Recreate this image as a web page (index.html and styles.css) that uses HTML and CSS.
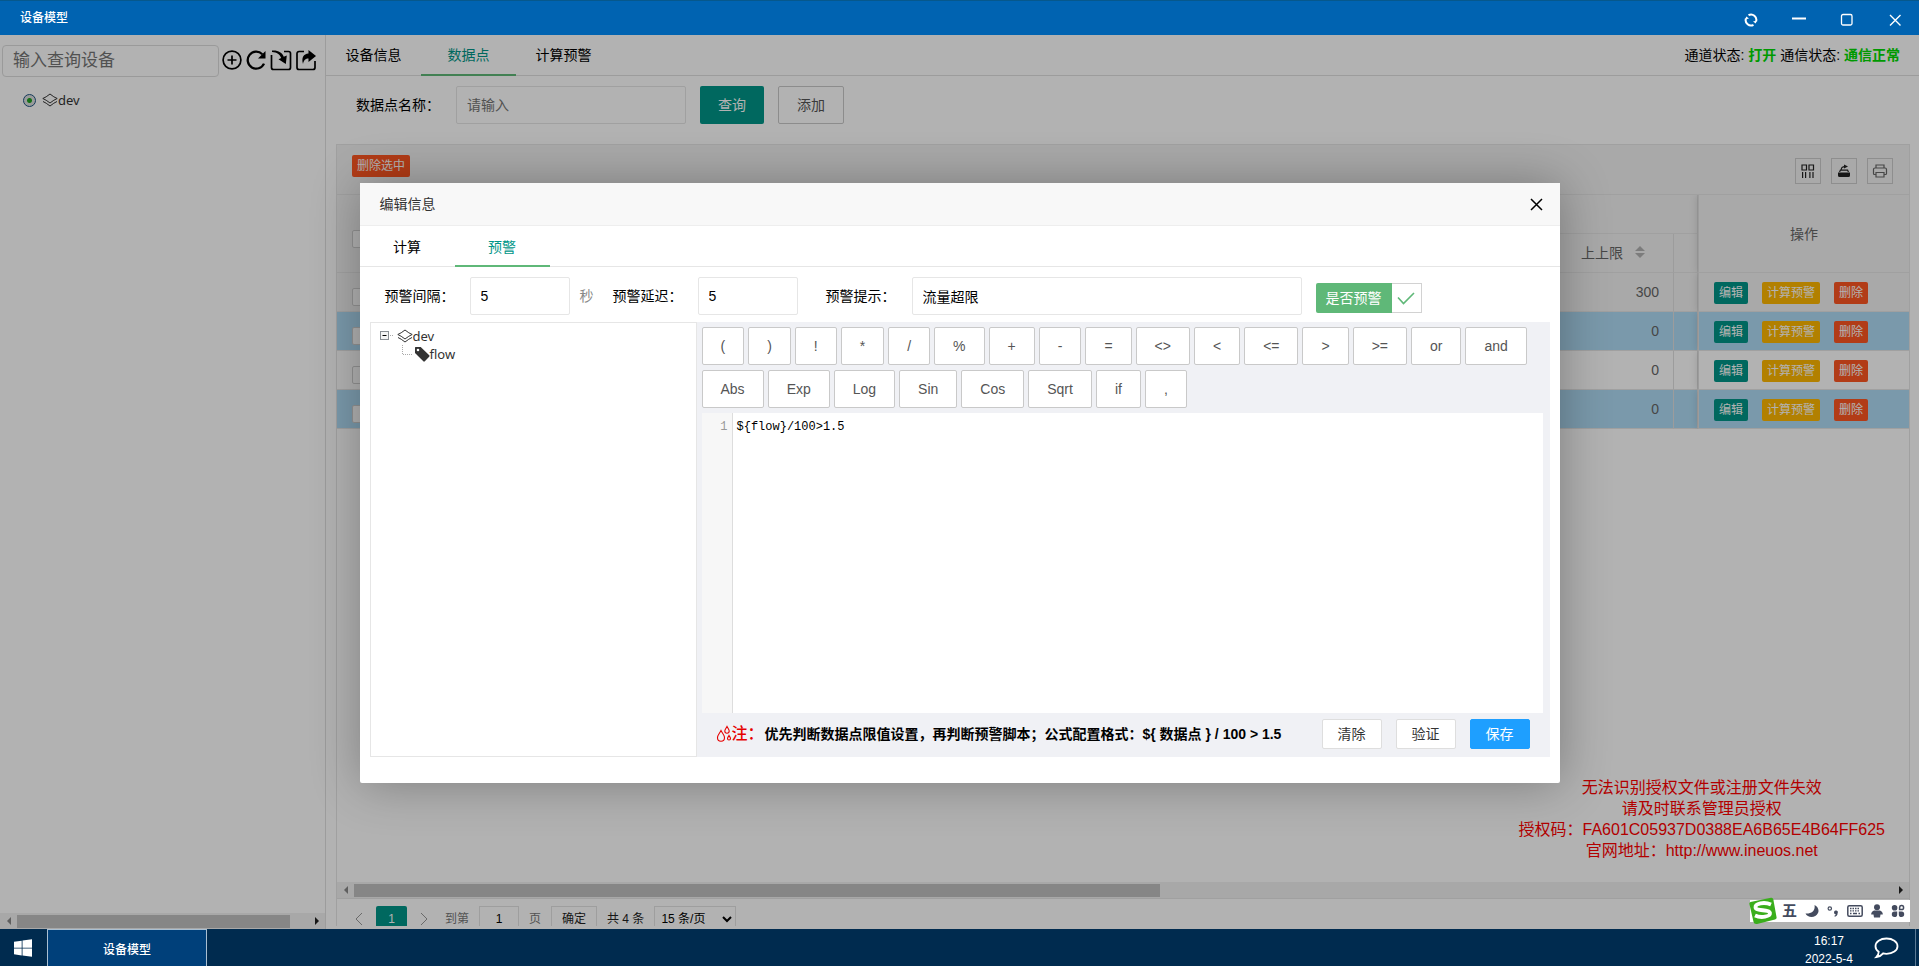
FILE: index.html
```html
<!DOCTYPE html>
<html lang="zh-CN">
<head>
<meta charset="utf-8">
<title>设备模型</title>
<link rel="stylesheet" href="styles.css">
</head>
<body>
<header class="titlebar">
  <h1 class="titlebar-name">设备模型</h1>
  <div class="window-controls">
    <button type="button" aria-label="刷新"><svg width="14" height="14" viewBox="0 0 14 14" fill="none" stroke="currentColor" stroke-width="2"><path d="M4.500 2.200a5.300 5.300 0 0 1 7.600 6.200M9.500 11.800a5.300 5.300 0 0 1-7.600-6.200"/><path d="M1 6.500L2.300 3.500 5 5.500zM13 7.500l-1.300 3L9 8.500z" fill="currentColor" stroke="none"/></svg></button>
    <button type="button" aria-label="最小化"><svg width="14" height="14" viewBox="0 0 14 14"><path d="M0 4.500h14v2H0z" fill="currentColor"/></svg></button>
    <button type="button" aria-label="最大化"><svg width="14" height="14" viewBox="0 0 14 14" fill="none" stroke="currentColor" stroke-width="1.3"><rect x="1.5" y="1.5" width="10.5" height="10.5" rx="1.5"/></svg></button>
    <button type="button" aria-label="关闭"><svg width="14" height="14" viewBox="0 0 14 14" fill="none" stroke="currentColor" stroke-width="1.4"><path d="M2 2l10.500 10.500M12.500 2L2 12.500"/></svg></button>
  </div>
</header>

<main class="workspace">
  <aside class="sidebar">
    <div class="sidebar-search">
      <input class="device-input" type="text" placeholder="输入查询设备" aria-label="输入查询设备">
      <button type="button" class="icon-btn" aria-label="新增"><svg width="20" height="20" viewBox="0 0 20 20" fill="none" stroke="currentColor" stroke-width="1.7"><circle cx="10" cy="10" r="8.900"/><path d="M10 5.500v9M5.500 10h9"/></svg></button>
      <button type="button" class="icon-btn" aria-label="刷新"><svg width="22" height="22" viewBox="0 0 22 22"><path d="M17.300 5.200A8.500 8.500 0 1 0 19 14.600" fill="none" stroke="currentColor" stroke-width="2.300"/><path d="M20.500 2v7.500h-7.500z" fill="currentColor"/></svg></button>
      <button type="button" class="icon-btn" aria-label="导入"><svg width="22" height="22" viewBox="0 0 22 22"><path d="M1.500 6v12.500a2 2 0 0 0 2 2h15a2 2 0 0 0 2-2V4.500a2 2 0 0 0-2-2H14" fill="none" stroke="currentColor" stroke-width="1.700"/><path d="M2 1.500c6-.5 10 1.800 11.800 6.200l3-1.200-1 8.500-7.300-4.800 2.700-1.200C9.800 5.500 7 3.200 2 3z" fill="currentColor"/></svg></button>
      <button type="button" class="icon-btn" aria-label="导出"><svg width="22" height="22" viewBox="0 0 22 22"><path d="M9 2.500H4a2 2 0 0 0-2 2v14a2 2 0 0 0 2 2h14a2 2 0 0 0 2-2V12" fill="none" stroke="currentColor" stroke-width="1.700"/><path d="M13.500 1l7.500 6-7.500 6V9.500C10.500 9.500 8.800 11 8 15 6.200 9 8.500 4.800 13.500 4.500z" fill="currentColor"/></svg></button>
    </div>
    <label class="device-node">
      <input type="radio" name="device" class="device-radio" checked>
      <svg width="16" height="14" viewBox="0 0 16 14" fill="none" stroke="currentColor"><path d="M.8 5.500Q4 4.300 8 1q4 3.300 7.200 4.500Q12 6.800 8 10 4 6.800.8 5.500zM1 8.500Q4 9.800 8 13q4-3.200 7-4.500"/></svg>
      <span>dev</span>
    </label>
    <div class="scrollbar sidebar-scroll"><span class="arrow arrow-left"></span><span class="thumb sidebar-thumb"></span><span class="arrow arrow-right"></span></div>
  </aside>

  <section class="content">
    <div class="content-head">
      <nav class="tabs">
        <button type="button" class="tab">设备信息</button>
        <button type="button" class="tab tab-active">数据点</button>
        <button type="button" class="tab">计算预警</button>
      </nav>
      <p class="status">通道状态: <b>打开</b> 通信状态: <b>通信正常</b></p>
    </div>

    <form class="query">
      <label class="query-label" for="point-name">数据点名称：</label>
      <input class="field query-field" id="point-name" type="text" placeholder="请输入">
      <button type="button" class="btn btn-primary">查询</button>
      <button type="button" class="btn">添加</button>
    </form>

    <div class="grid-panel">
      <div class="grid-tools">
        <button type="button" class="mini mini-danger">删除选中</button>
        <div class="tool-icons">
          <button type="button" class="tool" aria-label="筛选列"><svg width="14" height="14" viewBox="0 0 14 14" fill="none" stroke="currentColor" stroke-width="1.200"><path d="M1 1h4.500v5H1zM8 1h4.500v5H8zM1.600 8v6M4.600 8v6M8.900 8v6M12 8v6"/></svg></button>
          <button type="button" class="tool" aria-label="导出"><svg width="14" height="14" viewBox="0 0 14 14"><path d="M1 8.500h12v3a1.500 1.500 0 0 1-1.500 1.500h-9A1.500 1.500 0 0 1 1 11.500zM7 .5l4 2L7 4.500V3.500C5.500 3.500 5 4 4.800 5.500H11l1 2.500h-1.200l-.6-1.300H3.800L3.200 8H2l1-2.500h.7C3.800 3.500 5 2.300 7 2z" fill="currentColor"/></svg></button>
          <button type="button" class="tool tool-soft" aria-label="打印"><svg width="16" height="14" viewBox="0 0 16 14" fill="none" stroke="currentColor" stroke-width="1.200"><path d="M4 4V1h8v3M4 10.500H2.500a1 1 0 0 1-1-1v-4A1.500 1.500 0 0 1 3 4h10a1.500 1.500 0 0 1 1.500 1.500v4a1 1 0 0 1-1 1H12M4 8.500h8V13H4z"/></svg></button>
        </div>
      </div>
      <div class="grid-body">
        <table class="grid">
          <colgroup><col class="col-check"><col><col class="col-limit"><col class="col-gap"><col class="col-ops"></colgroup>
          <thead>
            <tr>
              <th rowspan="2" class="check-cell"><input type="checkbox" class="check" aria-label="全选"></th>
              <th colspan="3"></th>
              <th rowspan="2" class="ops-cell">操作</th>
            </tr>
            <tr>
              <th></th>
              <th class="limit-head">上上限 <svg width="10" height="14" viewBox="0 0 10 14"><path d="M5 1l5 5H0zM5 13l5-5H0z" fill="#b2b2b2"/></svg></th>
              <th></th>
            </tr>
          </thead>
          <tbody>
            <tr class="row-hover">
              <td class="check-cell"><input type="checkbox" class="check" aria-label="选择第1行"></td><td></td><td class="num">300</td><td></td>
              <td class="ops-cell"><div class="ops"><button type="button" class="mini mini-primary">编辑</button><button type="button" class="mini mini-warm">计算预警</button><button type="button" class="mini mini-danger">删除</button></div></td>
            </tr>
            <tr class="row-blue">
              <td class="check-cell"><input type="checkbox" class="check" aria-label="选择第2行"></td><td></td><td class="num">0</td><td></td>
              <td class="ops-cell"><div class="ops"><button type="button" class="mini mini-primary">编辑</button><button type="button" class="mini mini-warm">计算预警</button><button type="button" class="mini mini-danger">删除</button></div></td>
            </tr>
            <tr>
              <td class="check-cell"><input type="checkbox" class="check" aria-label="选择第3行"></td><td></td><td class="num">0</td><td></td>
              <td class="ops-cell"><div class="ops"><button type="button" class="mini mini-primary">编辑</button><button type="button" class="mini mini-warm">计算预警</button><button type="button" class="mini mini-danger">删除</button></div></td>
            </tr>
            <tr class="row-blue">
              <td class="check-cell"><input type="checkbox" class="check" aria-label="选择第4行"></td><td></td><td class="num">0</td><td></td>
              <td class="ops-cell"><div class="ops"><button type="button" class="mini mini-primary">编辑</button><button type="button" class="mini mini-warm">计算预警</button><button type="button" class="mini mini-danger">删除</button></div></td>
            </tr>
          </tbody>
        </table>
      </div>
      <div class="scrollbar"><span class="arrow arrow-left"></span><span class="thumb grid-thumb"></span><span class="arrow arrow-right"></span></div>
      <div class="pager">
        <button type="button" class="page-step" aria-label="上一页"><svg width="8" height="14" viewBox="0 0 8 14" fill="none" stroke="currentColor"><path d="M7 1L1 7l6 6"/></svg></button>
        <button type="button" class="page-current">1</button>
        <button type="button" class="page-step" aria-label="下一页"><svg width="8" height="14" viewBox="0 0 8 14" fill="none" stroke="currentColor"><path d="M1 1l6 6-6 6"/></svg></button>
        <label class="pager-soft pager-jump" for="page-no">到第</label>
        <input class="page-input" id="page-no" type="text" value="1">
        <span class="pager-soft">页</span>
        <button type="button" class="page-go">确定</button>
        <span class="pager-total">共 4 条</span>
        <select class="page-size" aria-label="每页条数"><option>15 条/页</option></select>
      </div>
    </div>
  </section>

  <div class="license">
    <p>无法识别授权文件或注册文件失效</p>
    <p>请及时联系管理员授权</p>
    <p>授权码：FA601C05937D0388EA6B65E4B64FF625</p>
    <p>官网地址：http://www.ineuos.net</p>
  </div>

  <div class="shade">
    <section class="modal" role="dialog" aria-labelledby="modal-title">
      <header class="modal-head">
        <h2 class="modal-title" id="modal-title">编辑信息</h2>
        <button type="button" class="modal-close" aria-label="关闭"><svg width="13" height="13" viewBox="0 0 13 13" fill="none" stroke="currentColor" stroke-width="1.500"><path d="M1 1l11 11M12 1L1 12"/></svg></button>
      </header>
      <nav class="tabs modal-tabs">
        <button type="button" class="tab">计算</button>
        <button type="button" class="tab tab-active">预警</button>
      </nav>
      <form class="alarm-form">
        <label class="alarm-label" for="interval">预警间隔：</label>
        <input class="field short-field" id="interval" type="text" value="5">
        <span class="unit">秒</span>
        <label class="alarm-label delay-label" for="delay">预警延迟：</label>
        <input class="field short-field" id="delay" type="text" value="5">
        <label class="alarm-label tip-label" for="tip">预警提示：</label>
        <input class="field tip-field" id="tip" type="text" value="流量超限">
        <label class="toggle">
          <input type="checkbox" class="toggle-input" checked>
          <span class="toggle-name">是否预警</span>
          <span class="toggle-mark"><svg width="18" height="13" viewBox="0 0 18 13" fill="none" stroke="#5fb878" stroke-width="1.600"><path d="M1 5.500L6.500 11.500 17 1"/></svg></span>
        </label>
      </form>
      <div class="editor-box">
        <div class="tree">
          <div class="tree-root">
            <svg width="14" height="10" viewBox="0 0 14 10"><rect x=".5" y=".5" width="8" height="8" fill="#f4f4f4" stroke="#8a8f94"/><path d="M2.500 4.500h4" stroke="#000"/><path d="M10 4.500h4" stroke="#aaa" stroke-dasharray="1 1"/></svg>
            <svg class="layers" width="16" height="14" viewBox="0 0 16 14" fill="none" stroke="currentColor"><path d="M.8 5.500Q4 4.300 8 1q4 3.300 7.200 4.500Q12 6.800 8 10 4 6.800.8 5.500zM1 8.500Q4 9.800 8 13q4-3.200 7-4.500"/></svg>
            <span>dev</span>
          </div>
          <div class="tree-leaf">
            <svg width="10" height="18" viewBox="0 0 10 18"><path d="M.5 0v9.500H10" fill="none" stroke="#aaa" stroke-dasharray="1 1"/></svg>
            <svg class="tag" width="16" height="16" viewBox="0 0 16 16"><path fill-rule="evenodd" d="M1.500 1h5.200l8.500 8.300a1 1 0 0 1 0 1.400l-4.400 4.500a1 1 0 0 1-1.500 0L1 7V1.500zM4 2.700a1.300 1.300 0 1 0 0 2.600 1.300 1.300 0 0 0 0-2.600z" fill="#333"/></svg>
            <span>flow</span>
          </div>
        </div>
        <div class="formula">
          <div class="keys">
            <button type="button" class="btn">(</button><button type="button" class="btn">)</button><button type="button" class="btn">!</button><button type="button" class="btn">*</button><button type="button" class="btn">/</button><button type="button" class="btn">%</button><button type="button" class="btn">+</button><button type="button" class="btn">-</button><button type="button" class="btn">=</button><button type="button" class="btn">&lt;&gt;</button><button type="button" class="btn">&lt;</button><button type="button" class="btn">&lt;=</button><button type="button" class="btn">&gt;</button><button type="button" class="btn">&gt;=</button><button type="button" class="btn">or</button><button type="button" class="btn">and</button>
          </div>
          <div class="keys">
            <button type="button" class="btn">Abs</button><button type="button" class="btn">Exp</button><button type="button" class="btn">Log</button><button type="button" class="btn">Sin</button><button type="button" class="btn">Cos</button><button type="button" class="btn">Sqrt</button><button type="button" class="btn">if</button><button type="button" class="btn">,</button>
          </div>
          <div class="code">
            <span class="gutter">1</span>
            <textarea class="code-text" aria-label="公式" spellcheck="false">${flow}/100&gt;1.5</textarea>
          </div>
          <div class="formula-foot">
            <p class="note"><svg width="16" height="18" viewBox="0 0 16 18" fill="none" stroke="#e60000" stroke-width="1.100"><path d="M5 5.500C3.500 8.500 1.500 10 1.500 12.700a3.500 3.500 0 0 0 7 0C8.500 10 6.500 8.500 5 5.500zM11 1.500c-.8 1.800-2.200 3-2.200 4.600a2.200 2.200 0 0 0 4.400 0C13.200 4.500 11.800 3.300 11 1.500zM13 10.500c-.6 1.200-1.500 2-1.500 3a1.500 1.500 0 0 0 3 0c0-1-.9-1.800-1.500-3z"/></svg><strong class="note-mark">注：</strong><span>优先判断数据点限值设置，再判断预警脚本；公式配置格式：${ 数据点 } / 100 &gt; 1.5</span></p>
            <div class="foot-actions">
              <button type="button" class="act">清除</button>
              <button type="button" class="act">验证</button>
              <button type="button" class="act act-save">保存</button>
            </div>
          </div>
        </div>
      </div>
    </section>
  </div>

  <div class="ime">
    <svg class="ime-logo" width="28" height="28" viewBox="0 0 28 28"><path d="M1.500 5L22 .8a2 2 0 0 1 2.300 1.500L27.500 20a2 2 0 0 1-1.500 2.500L8 27a3 3 0 0 1-3.500-2.300L.5 7.500A2 2 0 0 1 1.500 5z" fill="#3aae1c"/><path d="M22 7.500C15 4.500 6 6.500 6.500 10.500c.5 4 14 1.500 14.500 5.500.3 3.500-8.500 5.500-15 2.500" fill="none" stroke="#fff" stroke-width="3.800"/></svg>
    <span class="ime-mode">五</span>
    <svg width="14" height="14" viewBox="0 0 14 14"><path d="M9.500 1c1 5-2.500 9-9 8.500 2 4.500 10 5 12.500-.5C14.500 5.500 12.500 2.500 9.500 1z" fill="#444b5e"/></svg>
    <svg width="12" height="14" viewBox="0 0 12 14"><circle cx="2.800" cy="4.500" r="1.700" fill="none" stroke="#444b5e" stroke-width="1.200"/><path d="M7 8.200a1.900 1.900 0 1 1 3.600 1c0 2-1 3-2.800 3.600l-.4-1c.8-.3 1.200-.8 1.300-1.500A1.900 1.900 0 0 1 7 8.200z" fill="#444b5e"/></svg>
    <svg width="16" height="12" viewBox="0 0 16 12"><rect x=".8" y=".8" width="14.400" height="10.400" rx="1.500" fill="none" stroke="#444b5e" stroke-width="1.500"/><path d="M3 3.500h10M3 5.900h10" stroke="#444b5e" stroke-width="1.400" stroke-dasharray="1.500 1"/><path d="M3 8.500h1.500M6 8.500h4M11.500 8.500H13" stroke="#444b5e" stroke-width="1.400"/></svg>
    <svg width="12" height="14" viewBox="0 0 12 14"><circle cx="6" cy="3.200" r="3" fill="#444b5e"/><path d="M3 6.500h6c2 1 3 2.500 2.800 4H9.500l-.5 3H3l-.5-3H.2C0 9 1 7.500 3 6.500z" fill="#444b5e"/></svg>
    <svg width="14" height="14" viewBox="0 0 14 14" fill="#444b5e"><path d="M3.500 1A2.800 2.800 0 1 1 .8 3.800 2.800 2.800 0 0 1 3.500 1zM3.500 7.600h2.700v2.800A2.700 2.700 0 1 1 3.500 7.600zM7.800 7.600h2.800a2.700 2.700 0 1 1-2.800 2.800z"/><path d="M8.600 5.600V3.400a2 2 0 1 1 2 2.200z" fill="none" stroke="#444b5e" stroke-width="1.500"/></svg>
  </div>
</main>

<footer class="taskbar">
  <button type="button" class="start" aria-label="开始"><svg width="18" height="18" viewBox="0 0 18 18" fill="#fff"><path d="M0 2.800l7.700-1.100v7H0zM8.500 1.600L18 .2v8.500H8.500zM0 9.400h7.700v7L0 15.300zM8.500 9.400H18v8.400l-9.500-1.400z"/></svg></button>
  <button type="button" class="task">设备模型</button>
  <div class="clock"><time>16:17</time><time>2022-5-4</time></div>
  <button type="button" class="chat" aria-label="消息"><svg width="26" height="22" viewBox="0 0 26 22" fill="none" stroke="#fff" stroke-width="1.800"><path d="M13.500 1.500c6.300 0 11 3.400 11 7.700s-4.700 7.600-11 7.600c-1.200 0-2.300-.1-3.300-.4-1.600 2-3.700 3.200-6.700 3.600 1.500-1.500 2.200-3 2.200-5.200C3.600 13.400 2.500 11.400 2.500 9.200c0-4.300 4.700-7.700 11-7.700z"/></svg></button>
</footer>
</body>
</html>
```

FILE: styles.css
```css
* { box-sizing: border-box; }

body {
  margin: 0;
  height: 100vh;
  display: flex;
  flex-direction: column;
  overflow: hidden;
  background: #fff;
  color: #000;
  font: 14px/20px "Liberation Sans", "Noto Sans CJK SC", sans-serif;
}

h1, h2, p { margin: 0; font-weight: 400; }

button, input, select, textarea { font: inherit; color: inherit; margin: 0; }
button { padding: 0; border: 0; background: none; white-space: nowrap; }
svg { display: block; flex: none; }
input::placeholder { color: #757575; opacity: 1; }

/* title bar */
.titlebar {
  flex: none;
  height: 35px;
  display: flex;
  align-items: center;
  justify-content: space-between;
  padding-left: 20px;
  border-top: 1px solid #06588c;
  background: #0063b1;
  color: #fff;
}
.titlebar-name { font-size: 12px; font-weight: 500; }
.window-controls { display: flex; }
.window-controls button { width: 48px; height: 34px; display: grid; place-items: center; padding-top: 4px; }

/* workspace */
.workspace {
  position: relative;
  flex: 1;
  min-height: 0;
  display: grid;
  grid-template-columns: 326px minmax(0, 1fr);
}

.sidebar { display: flex; flex-direction: column; border-right: 1px solid #e0e0e0; }
.sidebar-search { display: flex; align-items: center; gap: 3px; padding: 10px 4px 0 2px; }
.icon-btn { padding-bottom: 3px; }
.device-input {
  width: 217px;
  height: 32px;
  padding: 0 10px;
  border: 1px solid #ddd;
  border-radius: 4px;
  background: #fff;
  font-size: 17px;
}
.device-node {
  display: flex;
  align-items: center;
  margin: 13px 0 0 23px;
  color: #333;
  font: 13px/20px "Noto Sans", sans-serif;
}
.device-radio {
  appearance: none;
  width: 13px;
  height: 13px;
  margin-right: 6px;
  border: 1px solid #1d5281;
  border-radius: 50%;
  background: radial-gradient(circle, #21a121 0 2px, #dcdfdf 3px);
}
.sidebar-scroll { margin-top: auto; }

.scrollbar { flex: none; display: flex; align-items: center; height: 16px; background: #f1f1f1; }
.arrow { width: 17px; height: 8px; flex: none; display: grid; place-items: center; }
.arrow::before { content: ""; border: 4px solid transparent; }
.arrow-left::before { border-right-color: #888; border-left-width: 0; }
.arrow-right { margin-left: auto; }
.arrow-right::before { border-left-color: #222; border-right-width: 0; }
.thumb { height: 13px; background: #c1c1c1; }
.sidebar-thumb { width: 84%; }
.grid-thumb { width: 51.3%; }

.content { display: flex; flex-direction: column; min-height: 0; }
.content-head {
  flex: none;
  display: flex;
  justify-content: space-between;
  align-items: center;
  height: 41px;
  padding-right: 19px;
  border-bottom: 1px solid #e0e0e0;
}
.tabs { display: flex; }
.tab { width: 95px; height: 41px; padding-top: 2px; border-bottom: 2px solid transparent; }
.tab-active { color: #009688; border-bottom-color: #5fb878; }
.status b { color: #00dc00; }

.query { flex: none; display: flex; gap: 14px; padding: 10px 30px 20px; }
.query-label { width: 86px; line-height: 38px; white-space: nowrap; }
.field {
  height: 38px;
  padding: 0 10px;
  border: 1px solid #e6e6e6;
  border-radius: 2px;
  background: #fff;
}
.query-field { width: 230px; }
.btn {
  height: 38px;
  padding: 0 18px;
  border: 1px solid #c9c9c9;
  border-radius: 2px;
  background: #fff;
  color: #555;
}
.btn-primary { border: 0; background: #009688; color: #fff; }

/* data grid */
.grid-panel {
  flex: 1;
  min-height: 0;
  display: flex;
  flex-direction: column;
  margin: 0 9px 3px 10px;
  border: 1px solid #e6e6e6;
  border-bottom: 0;
}
.grid-tools {
  flex: none;
  height: 50px;
  display: flex;
  justify-content: space-between;
  align-items: flex-start;
  padding: 10px 16px 10px 15px;
  border-bottom: 1px solid #e6e6e6;
  background: #f2f2f2;
}
.mini {
  height: 22px;
  padding: 0 5px;
  border-radius: 2px;
  color: #fff;
  font-size: 12px;
  line-height: 22px;
}
.mini-danger { background: #ff5722; }
.mini-primary { background: #009688; }
.mini-warm { background: #ffb800; }
.tool-icons { display: flex; gap: 10px; padding-top: 3px; }
.tool { width: 26px; height: 26px; display: grid; place-items: center; border: 1px solid #ccc; color: #222; }
.tool-soft { color: #666; }

.grid-body { flex: 1; min-height: 0; overflow: hidden; }
.grid { width: 100%; table-layout: fixed; border-collapse: separate; border-spacing: 0; color: #666; }
.col-check { width: 48px; }
.col-limit { width: 121px; }
.col-gap { width: 24px; }
.col-ops { width: 211px; }
.grid th, .grid td {
  height: 39px;
  padding: 0 15px;
  border-right: 1px solid #e0e0e0;
  border-bottom: 1px solid #e6e6e6;
  font-weight: 400;
}
.grid th { background: #f2f2f2; }
.row-hover td { background: #f2f2f2; }
.row-blue td { background: #afdcf5; }
.grid .check-cell { padding-top: 10px; border-right: 0; }
.grid .ops-cell {
  border-left: 1px solid #e0e0e0;
  border-right: 0;
  box-shadow: -1px 0 8px rgba(0, 0, 0, .12);
  clip-path: inset(0 0 0 -10px);
}
.limit-head svg { display: inline-block; margin-left: 8px; vertical-align: -1px; }
.grid .num { padding-right: 14px; text-align: right; }
.ops { display: flex; gap: 14px; padding-top: 2px; }
.check {
  appearance: none;
  display: block;
  width: 18px;
  height: 18px;
  border: 1px solid #d2d2d2;
  border-radius: 2px;
  background: #fff;
}

.pager {
  flex: none;
  height: 28px;
  display: flex;
  gap: 10px;
  padding: 7px 15px 0;
  overflow: hidden;
  border-top: 1px solid #e6e6e6;
  font-size: 12px;
  line-height: 26px;
}
.page-step { width: 14px; height: 26px; display: grid; place-items: center; color: #999; }
.page-current { width: 31px; height: 26px; border-radius: 2px; background: #009688; color: #fff; }
.page-input { width: 40px; height: 26px; border: 1px solid #e2e2e2; background: #fff; text-align: center; }
.page-go { width: 46px; height: 26px; border: 1px solid #e2e2e2; color: #222; line-height: 24px; }
.pager-soft { color: #777; }
.pager-jump { margin-left: 4px; }
.pager-total { color: #222; }
.page-size { width: 82px; height: 26px; padding: 0 2px; border: 1px solid #e2e2e2; background: #fff; }

/* license notice */
.license {
  position: absolute;
  right: 34px;
  bottom: 68px;
  color: #f00;
  font-size: 16px;
  line-height: 21px;
  text-align: center;
}

/* dialog */
.shade { position: absolute; inset: 0; display: grid; place-items: center; padding-top: 2px; background: rgba(0, 0, 0, .3); }
.modal {
  width: 1200px;
  max-width: 100%;
  min-height: 600px;
  border-radius: 2px;
  background: #fff;
  box-shadow: 1px 1px 50px rgba(0, 0, 0, .3);
}
.modal-head {
  height: 43px;
  display: flex;
  align-items: center;
  justify-content: space-between;
  padding: 0 17px 0 20px;
  border-bottom: 1px solid #eee;
  background: #f8f8f8;
}
.modal-title { font-size: 14px; color: #333; }
.modal-tabs { border-bottom: 1px solid #e6e6e6; }
.modal-tabs .tab { margin-bottom: -1px; }

.alarm-form { display: flex; align-items: center; padding: 10px 25px 7px; }
.alarm-label { width: 85px; white-space: nowrap; }
.short-field { width: 100px; }
.unit { margin: 0 19px 0 10px; color: #888; }
.tip-label { margin-left: 28px; width: 86px; }
.tip-field { width: 390px; }
.toggle { display: flex; height: 30px; margin: 4px 0 0 14px; border-radius: 2px; }
.toggle-input { position: absolute; opacity: 0; }
.toggle-name { padding: 0 10px; border-radius: 2px 0 0 2px; background: #5fb878; color: #fff; line-height: 30px; }
.toggle-mark { width: 30px; display: grid; place-items: center; border: 1px solid #d2d2d2; border-left: 0; }

.editor-box { display: grid; grid-template-columns: 327px minmax(0, 1fr); margin: 0 10px; }
.tree { padding: 4px 9px; border: 1px solid #e6e6e6; color: #333; font: 13px/18px "Noto Sans", sans-serif; }
.tree-root, .tree-leaf { display: flex; align-items: center; }
.layers { margin-left: 3px; }
.tree-leaf { padding-left: 22px; }
.tag { margin-left: 2px; }

.formula { padding: 5px 7px 8px 5px; background: #f0f1f5; }
.keys { display: flex; gap: 4px; margin-bottom: 5px; }
.code { display: flex; height: 300px; background: #fff; }
.gutter {
  width: 31px;
  padding: 5px 4px 0 0;
  border-right: 1px solid #ddd;
  background: #f7f7f7;
  color: #999;
  font: 12px/18px "Liberation Mono", monospace;
  text-align: right;
}
.code-text {
  flex: 1;
  padding: 5px 4px;
  border: 0;
  outline: 0;
  resize: none;
  background: #fff;
  font: 12px/18px "Liberation Mono", monospace;
}
.formula-foot { display: flex; align-items: center; justify-content: space-between; height: 36px; padding: 5px 13px 0 14px; }
.note { display: flex; align-items: center; font-weight: 700; white-space: nowrap; }
.note-mark { width: 33px; color: #e60000; font-size: 16px; font-weight: 500; }
.foot-actions { display: flex; gap: 14px; }
.act { width: 60px; height: 30px; border: 1px solid #dedede; border-radius: 2px; background: #fff; color: #333; }
.act-save { border-color: #1e9fff; background: #1e9fff; color: #fff; }

/* input method bar */
.ime {
  position: absolute;
  right: 9px;
  bottom: 7px;
  display: flex;
  align-items: center;
  gap: 8px;
  height: 22px;
  padding-right: 5px;
  background: #fff;
}
.ime-logo { margin: 0 -3px 0 -1px; }
.ime-mode { color: #444b5e; font-size: 15px; font-weight: 700; }

/* task bar */
.taskbar { flex: none; height: 37px; display: flex; background: #002b4f; color: #fff; font-size: 12px; }
.start { width: 47px; display: grid; place-items: center; padding-right: 2px; }
.task { width: 160px; padding-top: 4px; border: 1px solid #a9bfd2; border-bottom: 0; background: #00407a; font-weight: 500; }
.clock { display: grid; align-content: start; margin-left: auto; padding: 3px 3px 0 0; line-height: 18px; text-align: center; }
.chat { width: 60px; display: grid; place-items: center; margin-right: 3px; border-right: 1px solid #5b7a95; }
```
